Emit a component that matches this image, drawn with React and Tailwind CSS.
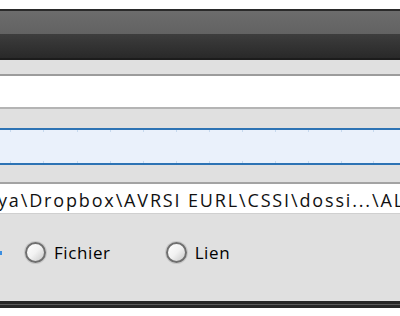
import React from "react"

const font = { fontFamily: '"Open Sans", "Noto Sans", "DejaVu Sans", sans-serif' }

function Radio({ label }) {
  return (
    <label className="flex items-center gap-[8px]">
      <span className="w-[21px] h-[21px] rounded-full border-2 border-[#6f6f6f] bg-gradient-to-br from-white via-[#f2f2f2] to-[#c9c9c9] shadow-[0_0_0_1px_#c8c8c8]" />
      <span className="text-[17px] tracking-[0.6px] leading-none text-black">{label}</span>
    </label>
  )
}

export default function App() {
  const ticks = [10, 43, 77, 110, 143, 176, 209, 242, 275, 308, 341, 373]

  return (
    <div className="w-[400px] h-[316px] bg-white overflow-hidden flex flex-col" style={font}>
      <div className="h-[9px]" />

      {/* title bar */}
      <div className="h-[51px] flex flex-col border-t-2 border-[#2a2a2a] border-b-2 border-b-[#1c1c1c]">
        <div className="h-[23px] bg-gradient-to-b from-[#6c6c6c] to-[#626262]" />
        <div className="flex-1 bg-gradient-to-b from-[#3d3d3d] to-[#292929]" />
      </div>

      <div className="h-[14px] bg-[#e0e0e0]" />

      {/* empty text box */}
      <div className="h-[35px] bg-white border-t-2 border-[#9c9c9c] border-b-2 border-b-[#b4b4b4]" />

      <div className="h-[19px] bg-[#e0e0e0]" />

      {/* selected row */}
      <div className="relative h-[37px] bg-[#eaf1fb] border-y-2 border-[#2d73b4]">
        {ticks.map(x => (
          <div key={x} className="absolute top-0 w-[1px] h-[2px] bg-[#c6d9ee]" style={{ left: x }} />
        ))}
        {ticks.map(x => (
          <div key={"b" + x} className="absolute bottom-0 w-[1px] h-[2px] bg-[#c6d9ee]" style={{ left: x }} />
        ))}
      </div>

      <div className="h-[17px] bg-[#e0e0e0]" />

      {/* path field */}
      <div className="h-[32px] bg-white border-t-2 border-[#a3a3a3] border-b border-b-[#d0d0d0] flex items-center pt-[2px] overflow-hidden">
        <span className="ml-[-2px] whitespace-nowrap text-[18px] tracking-[1.85px] leading-none text-[#111]">
          ya\Dropbox\AVRSI EURL\CSSI\dossi...\ALLIANCE
        </span>
      </div>

      {/* radios */}
      <div className="flex-1 bg-[#e0e0e0] flex items-start pt-[28px]">
        <div className="w-[2px] h-[4px] mt-[9px] bg-[#3b8ee0]" />
        <div className="ml-[23px]">
          <Radio label="Fichier" />
        </div>
        <div className="ml-[55px]">
          <Radio label="Lien" />
        </div>
      </div>

      {/* bottom edge */}
      <div className="h-[7px] bg-[#262626] flex flex-col">
        <div className="h-[3px]" />
        <div className="h-[1px] bg-[#5a5a5a]" />
      </div>
      <div className="h-[8px] bg-white" />
    </div>
  )
}
